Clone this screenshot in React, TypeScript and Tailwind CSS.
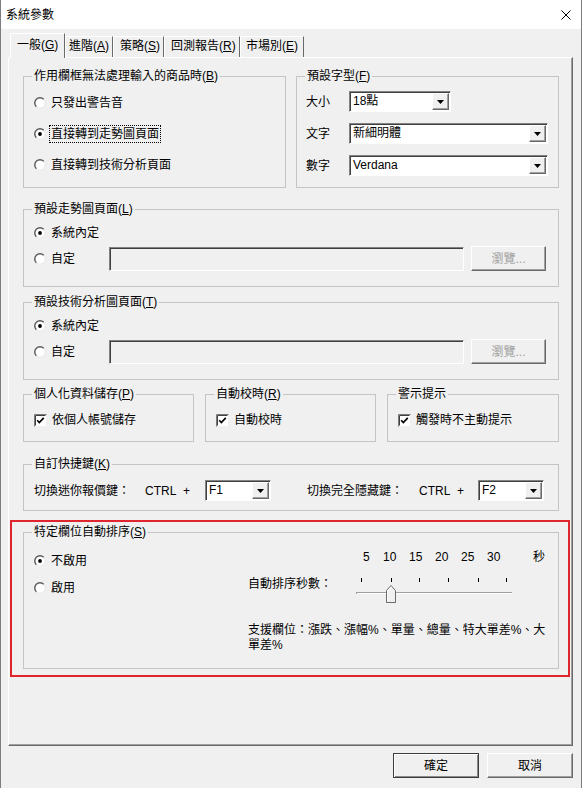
import React from 'react';

const raised =
  'border border-t-white border-l-white border-r-[#696969] border-b-[#696969] shadow-[inset_-1px_-1px_0_#a0a0a0]';
const sunken =
  'border border-t-[#828282] border-l-[#828282] border-r-white border-b-white shadow-[inset_1px_1px_0_#404040]';

const Acc: React.FC<{ pre: string; k: string }> = ({ pre, k }) => (
  <>
    {pre}(<span className="underline">{k}</span>)
  </>
);

const Radio: React.FC<{ checked?: boolean }> = ({ checked }) => (
  <svg width="12" height="12" viewBox="0 0 12 12" className="shrink-0">
    <circle cx="6" cy="6" r="5.2" fill="#fff" stroke="#e8e8e8" strokeWidth="1" />
    <path d="M2.3 9.7 A5.2 5.2 0 0 1 9.7 2.3" fill="none" stroke="#5a5a5a" strokeWidth="1.4" />
    {checked && <circle cx="6" cy="6" r="1.9" fill="#000" />}
  </svg>
);

const Check: React.FC = () => (
  <svg width="13" height="13" viewBox="0 0 13 13" className="shrink-0">
    <rect x="0.5" y="0.5" width="12" height="12" fill="#fff" stroke="#f0f0f0" />
    <path d="M0.5 12.5V0.5H12.5" fill="none" stroke="#7a7a7a" />
    <path d="M1.5 11.5V1.5H11.5" fill="none" stroke="#404040" />
    <path d="M3.2 6.3 L5.3 8.6 L9.8 3.8" fill="none" stroke="#000" strokeWidth="1.7" />
  </svg>
);

const Combo: React.FC<{ value: string; w: string }> = ({ value, w }) => (
  <div className={`${w} h-[21px] flex bg-white ${sunken}`}>
    <span className="flex-1 pl-[3px] leading-[18px]">{value}</span>
    <span className={`w-[17px] my-[1px] mr-[1px] bg-[#f0f0f0] flex items-center justify-center ${raised}`}>
      <svg width="7" height="4" viewBox="0 0 7 4">
        <path d="M0 0h7L3.5 4z" fill="#000" />
      </svg>
    </span>
  </div>
);

const Group: React.FC<{ title: React.ReactNode; h: string; className?: string; children?: React.ReactNode }> = ({
  title,
  h,
  className = '',
  children,
}) => (
  <fieldset className={`border border-[#c4c4c4] ${h} ${className}`}>
    <legend className="ml-[8px] px-[2px] leading-[16px]">{title}</legend>
    {children}
  </fieldset>
);

const RadioRow: React.FC<{ label: string; checked?: boolean; focus?: boolean; h?: string }> = ({
  label,
  checked,
  focus,
  h = 'h-[20px]',
}) => (
  <div className={`flex items-center gap-[3px] ${h}`}>
    <Radio checked={checked} />
    <span
      className={`px-[1px] leading-[16px] border ${focus ? 'border-dotted border-black' : 'border-transparent'}`}
    >
      {label}
    </span>
  </div>
);

const PathGroup: React.FC<{ title: React.ReactNode }> = ({ title }) => (
  <Group title={title} h="h-[86px]">
    <div className="pl-[10px] pr-[11px]">
      <div className="mt-[8px]">
        <RadioRow label="系統內定" checked h="h-[16px]" />
      </div>
      <div className="mt-[4px] h-[27px] flex items-center">
        <div className="w-[75px]">
          <RadioRow label="自定" h="h-[16px]" />
        </div>
        <div className={`w-[355px] h-[24px] bg-[#f0f0f0] ${sunken}`} />
        <button className={`ml-[7px] w-[75px] h-[25px] bg-[#f0f0f0] text-[#a0a0a0] ${raised}`}>瀏覽...</button>
      </div>
    </div>
  </Group>
);

const Slider: React.FC = () => (
  <svg width="160" height="30" viewBox="0 0 160 30">
    {[7, 37, 65, 94, 124, 152].map((x) => (
      <rect key={x} x={x} y="3" width="1" height="4" fill="#000" />
    ))}
    <rect x="2" y="17" width="156" height="1" fill="#a0a0a0" />
    <rect x="2" y="18" width="156" height="1" fill="#ffffff" />
    <rect x="2" y="17" width="1" height="2" fill="#a0a0a0" />
    <path d="M32.5 27.5V15.5L37 10.5L41.5 15.5V27.5Z" fill="#f0f0f0" stroke="#696969" />
    <path d="M33.5 26.5V15.8L37 11.9" fill="none" stroke="#fff" />
  </svg>
);

export default function App() {
  return (
    <div className="w-[582px] h-[788px] bg-[#f0f0f0] border-x border-[#7d7d7d] flex flex-col overflow-hidden text-[12px] leading-[16px] text-black font-['Liberation_Sans','Noto_Sans_CJK_TC',sans-serif]">
      {/* title bar */}
      <div className="h-[29px] bg-white flex items-center justify-between pl-[5px] pr-[10px] shrink-0">
        <span>系統參數</span>
        <svg width="10" height="10" viewBox="0 0 10 10">
          <path d="M0.5 0.5L9.5 9.5M9.5 0.5L0.5 9.5" stroke="#000" strokeWidth="1" />
        </svg>
      </div>

      {/* tabs */}
      <div className="mt-[4px] ml-[9px] h-[24px] flex items-end shrink-0">
        <div className="relative z-10 -mb-[1px] w-[55px] h-[25px] bg-[#f0f0f0] border-t border-l border-r border-t-white border-l-white border-r-[#696969] pl-[6px] pt-[3px]">
          <Acc pre="一般" k="G" />
        </div>
        <div className="w-[48px] h-[21px] border-t border-l border-r border-t-white border-l-white border-r-[#696969] pl-[3px] pt-[1px]">
          <Acc pre="進階" k="A" />
        </div>
        <div className="w-[51px] h-[21px] border-t border-l border-r border-t-white border-l-white border-r-[#696969] pl-[6px] pt-[1px]">
          <Acc pre="策略" k="S" />
        </div>
        <div className="w-[76px] h-[21px] border-t border-l border-r border-t-white border-l-white border-r-[#696969] pl-[6px] pt-[1px]">
          <Acc pre="回測報告" k="R" />
        </div>
        <div className="w-[64px] h-[21px] border-t border-l border-r border-t-white border-l-white border-r-[#696969] pl-[5px] pt-[1px]">
          <Acc pre="市場別" k="E" />
        </div>
      </div>

      {/* panel */}
      <div className={`ml-[7px] w-[565px] h-[689px] shrink-0 pl-[14px] pr-[13px] pt-[10px] ${raised}`}>
        <div className="flex gap-[10px]">
          <Group title={<Acc pre="作用欄框無法處理輸入的商品時" k="B" />} h="h-[120px]" className="w-[263px]">
            <div className="pl-[10px] mt-[9px] flex flex-col gap-[11px]">
              <RadioRow label="只發出警告音" />
              <RadioRow label="直接轉到走勢圖頁面" checked focus />
              <RadioRow label="直接轉到技術分析頁面" />
            </div>
          </Group>
          <Group title={<Acc pre="預設字型" k="F" />} h="h-[120px]" className="w-[263px]">
            <div className="pl-[9px] mt-[7px] flex flex-col gap-[11px]">
              <div className="flex items-center h-[21px]">
                <span className="w-[43px]">大小</span>
                <Combo value="18點" w="w-[102px]" />
              </div>
              <div className="flex items-center h-[21px]">
                <span className="w-[43px]">文字</span>
                <Combo value="新細明體" w="w-[199px]" />
              </div>
              <div className="flex items-center h-[21px]">
                <span className="w-[43px]">數字</span>
                <Combo value="Verdana" w="w-[199px]" />
              </div>
            </div>
          </Group>
        </div>

        <div className="mt-[13px]">
          <PathGroup title={<Acc pre="預設走勢圖頁面" k="L" />} />
        </div>
        <div className="mt-[7px]">
          <PathGroup title={<Acc pre="預設技術分析圖頁面" k="T" />} />
        </div>

        <div className="mt-[6px] flex gap-[11px]">
          {[
            { t: <Acc pre="個人化資料儲存" k="P" />, l: '依個人帳號儲存', w: 'w-[171px]' },
            { t: <Acc pre="自動校時" k="R" />, l: '自動校時', w: 'w-[171px]' },
            { t: '警示提示', l: '觸發時不主動提示', w: 'w-[172px]' },
          ].map((g, i) => (
            <Group key={i} title={g.t} h="h-[56px]" className={g.w}>
              <div className="pl-[10px] mt-[10px] flex items-center gap-[5px] h-[16px]">
                <Check />
                <span>{g.l}</span>
              </div>
            </Group>
          ))}
        </div>

        <div className="mt-[14px]">
          <Group title={<Acc pre="自訂快捷鍵" k="K" />} h="h-[55px]">
            <div className="pl-[10px] mt-[8px] flex items-center h-[21px]">
              <span className="w-[111px]">切換迷你報價鍵：</span>
              <span className="w-[60px]">CTRL&nbsp;&nbsp;+</span>
              <Combo value="F1" w="w-[66px]" />
              <span className="ml-[36px] w-[112px]">切換完全隱藏鍵：</span>
              <span className="w-[59px]">CTRL&nbsp;&nbsp;+</span>
              <Combo value="F2" w="w-[66px]" />
            </div>
          </Group>
        </div>

        <div className="mt-[9px] -ml-[13px] -mr-[11px] border-2 border-[#e0252f] pl-[11px] pr-[9px] pt-[2px] pb-[6px]">
          <Group title={<Acc pre="特定欄位自動排序" k="S" />} h="h-[145px]">
            <div className="flex">
              <div className="w-[224px] pl-[10px] mt-[13px] flex flex-col gap-[11px]">
                <RadioRow label="不啟用" checked h="h-[16px]" />
                <RadioRow label="啟用" h="h-[16px]" />
              </div>
              <div className="flex flex-col">
                <div className="mt-[9px] h-[16px] flex pl-[115px]">
                  <span className="w-[20px]">5</span>
                  <span className="w-[26px]">10</span>
                  <span className="w-[26px]">15</span>
                  <span className="w-[26px]">20</span>
                  <span className="w-[26px]">25</span>
                  <span className="w-[46px]">30</span>
                  <span>秒</span>
                </div>
                <div className="mt-[10px] flex h-[30px]">
                  <span className="w-[106px] mt-[1px]">自動排序秒數：</span>
                  <Slider />
                </div>
                <p className="mt-[18px] w-[305px] leading-[15px]">
                  支援欄位：漲跌、漲幅%、單量、總量、特大單差%、大
                  <br />
                  單差%
                </p>
              </div>
            </div>
          </Group>
        </div>
      </div>

      {/* buttons */}
      <div className="mt-[7px] flex justify-end gap-[8px] pr-[8px]">
        <button className="w-[86px] h-[25px] bg-[#f0f0f0] border border-[#3c3c3c] shadow-[inset_1px_1px_0_#fff,inset_-1px_-1px_0_#8a8a8a]">
          確定
        </button>
        <button className={`w-[86px] h-[25px] bg-[#f0f0f0] ${raised}`}>取消</button>
      </div>
    </div>
  );
}
